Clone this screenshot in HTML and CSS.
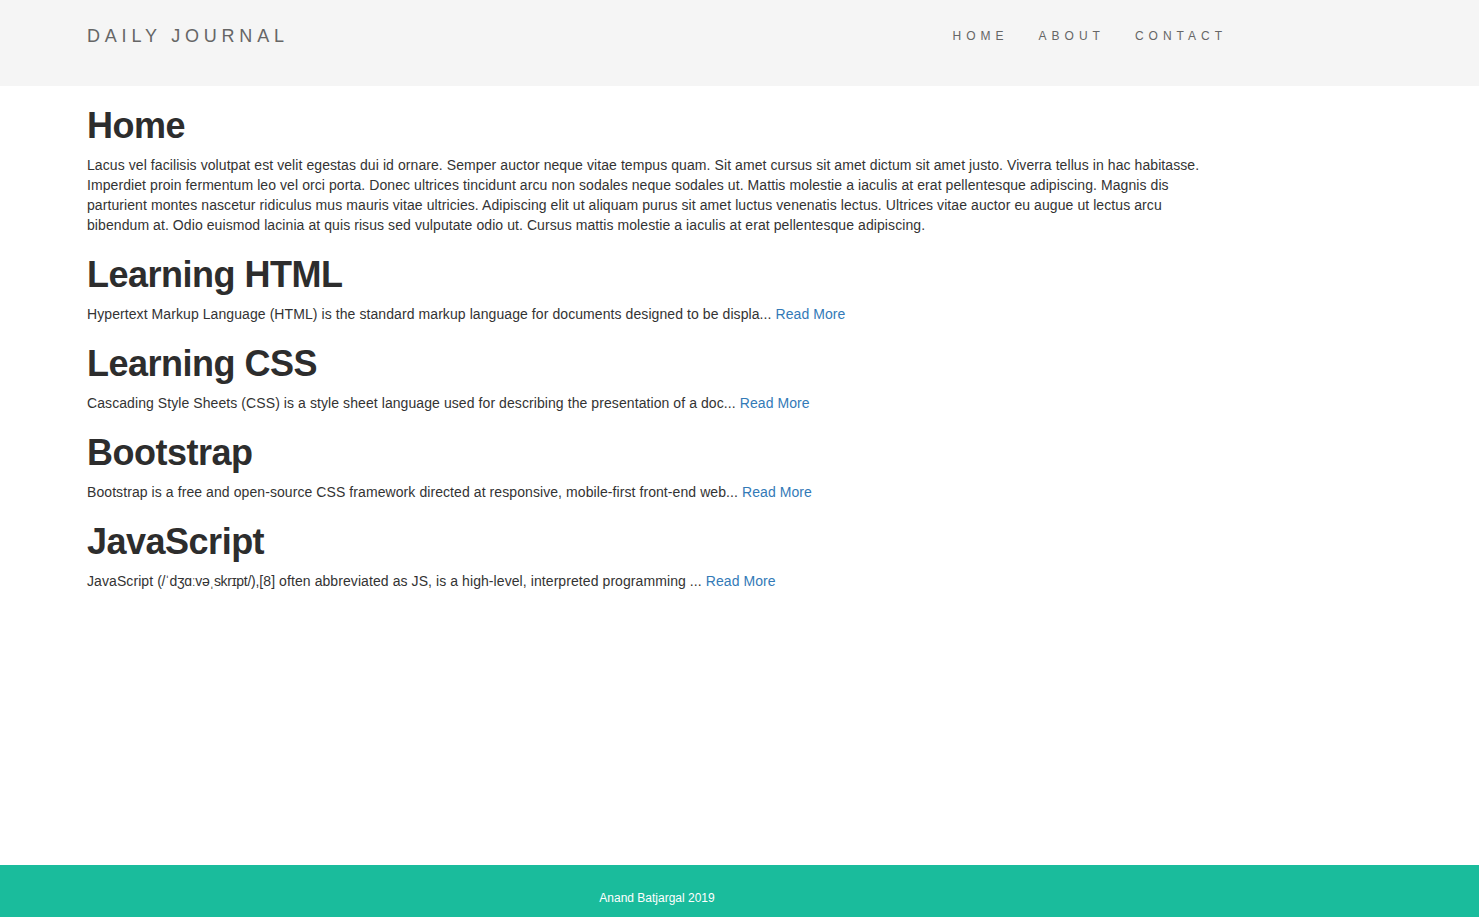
FILE: index.html
```html
<!DOCTYPE html>
<html lang="en">
<head>
<meta charset="utf-8">
<title>Daily Journal</title>
<link rel="stylesheet" href="styles.css">
</head>
<body>
<div class="page">
  <header class="navbar">
    <div class="container nav-row">
      <a class="brand" href="#">DAILY JOURNAL</a>
      <ul class="nav-links">
        <li><a href="#">HOME</a></li>
        <li><a href="#">ABOUT</a></li>
        <li><a href="#">CONTACT</a></li>
      </ul>
    </div>
  </header>

  <main class="container content">
    <h1>Home</h1>
    <p>Lacus vel facilisis volutpat est velit egestas dui id ornare. Semper auctor neque vitae tempus quam. Sit amet cursus sit amet dictum sit amet justo. Viverra tellus in hac habitasse. Imperdiet proin fermentum leo vel orci porta. Donec ultrices tincidunt arcu non sodales neque sodales ut. Mattis molestie a iaculis at erat pellentesque adipiscing. Magnis dis parturient montes nascetur ridiculus mus mauris vitae ultricies. Adipiscing elit ut aliquam purus sit amet luctus venenatis lectus. Ultrices vitae auctor eu augue ut lectus arcu bibendum at. Odio euismod lacinia at quis risus sed vulputate odio ut. Cursus mattis molestie a iaculis at erat pellentesque adipiscing.</p>

    <h1>Learning HTML</h1>
    <p>Hypertext Markup Language (HTML) is the standard markup language for documents designed to be displa... <a href="#">Read More</a></p>

    <h1>Learning CSS</h1>
    <p>Cascading Style Sheets (CSS) is a style sheet language used for describing the presentation of a doc... <a href="#">Read More</a></p>

    <h1>Bootstrap</h1>
    <p>Bootstrap is a free and open-source CSS framework directed at responsive, mobile-first front-end web... <a href="#">Read More</a></p>

    <h1>JavaScript</h1>
    <p>JavaScript <span class="ipa">(/ˈdʒɑːvəˌskrɪpt/)</span>,[8] often abbreviated as JS, is a high-level, interpreted programming ... <a href="#">Read More</a></p>
  </main>

  <footer class="footer">
    <div class="container footer-inner">
      <p>Anand Batjargal 2019</p>
    </div>
  </footer>
</div>
</body>
</html>
```

FILE: styles.css
```css
* {
  box-sizing: border-box;
}

html, body {
  margin: 0;
  padding: 0;
}

body {
  font-family: "Helvetica Neue", Helvetica, "Liberation Sans", Arial, sans-serif;
  font-size: 14px;
  line-height: 20px;
  color: #333;
  background: #fff;
}

.page {
  min-height: 100vh;
  display: flex;
  flex-direction: column;
}

.container {
  width: 1170px;
  margin-left: 72px;
  padding: 0 15px;
}

a {
  color: #337ab7;
  text-decoration: none;
}

/* Navbar */
.navbar {
  background: #f5f5f5;
  height: 86px;
  padding-top: 26px;
}

.nav-row {
  display: flex;
  justify-content: space-between;
  align-items: flex-start;
}

.brand {
  font-size: 18px;
  line-height: 20px;
  letter-spacing: 4.8px;
  color: #666;
}

.nav-links {
  list-style: none;
  margin: 0 -15px 0 0;
  padding: 0;
  display: flex;
}

.nav-links a {
  display: block;
  padding: 0 15px;
  font-size: 12px;
  line-height: 20px;
  letter-spacing: 5px;
  color: #666;
}

.nav-links li:first-child a {
  padding-left: 17px;
}

/* Content */
.content {
  flex: 1;
}

.content h1 {
  font-size: 36px;
  line-height: 40px;
  font-weight: 700;
  letter-spacing: -0.5px;
  color: #2d2d2d;
  margin: 20px 0 9px;
}

.content p {
  margin: 0 0 10px;
  letter-spacing: 0.08px;
}

.ipa {
  letter-spacing: -0.3px;
}

/* Footer */
.footer {
  background: #1abc9c;
  height: 52px;
  padding-top: 25px;
}

.footer-inner {
  text-align: center;
}

.footer-inner p {
  margin: 0;
  font-size: 12px;
  line-height: 17px;
  color: #fff;
}
```
